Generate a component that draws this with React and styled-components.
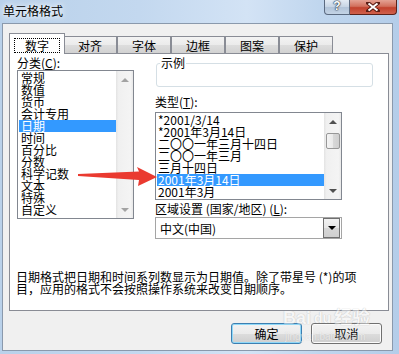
import React from "react";
import styled, { createGlobalStyle } from "styled-components";

const GlobalStyle = createGlobalStyle`
  html, body {
    margin: 0;
    padding: 0;
  }
  body {
    width: 399px;
    height: 354px;
    overflow: hidden;
    font-family: "Liberation Sans", "Noto Sans CJK SC", sans-serif;
    font-size: 12px;
    color: #000;
  }
`;

const categories = ["常规", "数值", "货币", "会计专用", "日期", "时间", "百分比", "分数", "科学记数", "文本", "特殊", "自定义"];
const types = ["*2001/3/14", "*2001年3月14日", "二〇〇一年三月十四日", "二〇〇一年三月", "三月十四日", "2001年3月14日", "2001年3月"];
const tabs = ["数字", "对齐", "字体", "边框", "图案", "保护"];

export default function App() {
  return (
    <>
      <GlobalStyle />
      <Frame>
        <TitleBar>
          <Title>单元格格式</Title>
          <Caption>
            <HelpBtn>?</HelpBtn>
            <CloseBtn>
              <svg width="14" height="10" viewBox="0 0 14 10">
                <path d="M2 1 L12 9 M12 1 L2 9" stroke="#5a1d15" strokeWidth="4" strokeLinecap="round" />
                <path d="M2.5 1.5 L11.5 8.5 M11.5 1.5 L2.5 8.5" stroke="#fff" strokeWidth="2" />
              </svg>
            </CloseBtn>
          </Caption>
        </TitleBar>
        <Client>
          <TabStrip>
            {tabs.map((t, i) => (
              <Tab key={t} active={i === 0}>
                {i === 0 ? <Focus>{t}</Focus> : t}
              </Tab>
            ))}
          </TabStrip>
          <Panel>
            <Columns>
              <LeftCol>
                <Label>分类(<u>C</u>):</Label>
                <ListBox h={149}>
                  <Items>
                    {categories.map((c, i) => (
                      <Item key={c} indent={2} selected={i === 4}>{c}</Item>
                    ))}
                  </Items>
                  <ScrollBar>
                    <Arrow dim />
                    <Track />
                    <Arrow dim down />
                  </ScrollBar>
                </ListBox>
              </LeftCol>
              <RightCol>
                <Sample>
                  <Legend>示例</Legend>
                </Sample>
                <Label top={9}>类型(<u>T</u>):</Label>
                <ListBox h={88} w={187} top={3}>
                  <Items>
                    {types.map((t, i) => (
                      <Item key={t} indent={1} selected={i === 5}>{t}</Item>
                    ))}
                  </Items>
                  <ScrollBar>
                    <Arrow />
                    <Track>
                      <Thumb />
                    </Track>
                    <Arrow down />
                  </ScrollBar>
                </ListBox>
                <Label top={3}>区域设置 (国家/地区) (<u>L</u>):</Label>
                <Combo>
                  <ComboText>中文(中国)</ComboText>
                  <ComboBtn />
                </Combo>
              </RightCol>
            </Columns>
            <Description>
              日期格式把日期和时间系列数显示为日期值。除了带星号 (*)的项<br />
              目，应用的格式不会按照操作系统来改变日期顺序。
            </Description>
          </Panel>
          <ButtonRow>
            <Button primary>确定</Button>
            <Button>取消</Button>
          </ButtonRow>
        </Client>
        <Watermark>
          <Brand>Bai<Paw>du</Paw>经验</Brand>
          <Site>jingyan.baidu.com</Site>
        </Watermark>
        <Pointer width="399" height="354" viewBox="0 0 399 354">
          <polygon
            points="78,174 139,171.5 137,167 157,177 138,186 139,180 78,176"
            fill="#ea3a30"
          />
        </Pointer>
      </Frame>
    </>
  );
}

const Frame = styled.div`
width: 399px;
height: 354px;
box-sizing: border-box;
padding: 0 6px 3px 2px;
display: flex;
flex-direction: column;
position: relative;
background: linear-gradient(90deg, #b9d1ea 0%, #c3d8ef 35%, #d3e3f5 62%, #c0d6ee 80%, #b4cde9 100%);
`

const TitleBar = styled.div`
height: 23px;
flex: none;
display: flex;
align-items: flex-start;
justify-content: space-between;
`

const Title = styled.div`
margin: 4px 0 0 1px;
font-family: "Noto Sans CJK SC", sans-serif;
font-size: 12px;
line-height: 14px;
text-shadow: 0 0 5px #fff, 0 0 8px #fff;
`

const Caption = styled.div`
display: flex;
margin-right: -4px;
`

const HelpBtn = styled.div`
width: 26px;
height: 15px;
box-sizing: border-box;
border: 1px solid #5b6a80;
border-top: none;
border-radius: 0 0 0 4px;
background: linear-gradient(180deg, #e3ebf4 0%, #c6d4e4 50%, #b1c3d8 51%, #c3d3e5 100%);
color: #fff;
font-family: "Liberation Sans", sans-serif;
font-weight: bold;
font-size: 12px;
line-height: 13px;
text-align: center;
text-shadow: 0 0 1px #243449, 0 0 1px #243449, 0 0 2px #243449;
`

const CloseBtn = styled.div`
width: 47px;
height: 15px;
box-sizing: border-box;
border: 1px solid #5c2219;
border-top: none;
border-left: none;
border-radius: 0 0 4px 0;
background: linear-gradient(180deg, #e4a294 0%, #d2705d 45%, #c2412d 55%, #d0614c 100%);
display: flex;
align-items: center;
justify-content: center;
`

const Client = styled.div`
flex: 1;
box-sizing: border-box;
border: 1px solid #8a99ac;
background: #f0f0f0;
padding: 9px 0 0 6px;
display: flex;
flex-direction: column;
`

const TabStrip = styled.div`
display: flex;
align-items: flex-end;
height: 21px;
margin-bottom: -1px;
position: relative;
z-index: 1;
`

const Tab = styled.div`
box-sizing: border-box;
display: flex;
align-items: center;
justify-content: center;
font-family: "Noto Sans CJK SC", sans-serif;
border: 1px solid #898c95;
border-bottom: none;
width: ${p => (p.active ? "56px" : "54px")};
height: ${p => (p.active ? "21px" : "17px")};
margin-right: ${p => (p.active ? "-2px" : "0")};
margin-bottom: ${p => (p.active ? "0" : "1px")};
padding-top: ${p => (p.active ? "0" : "1px")};
background: ${p => (p.active ? "#fff" : "linear-gradient(180deg, #f3f3f3 0%, #ebebeb 50%, #dddddd 51%, #d2d2d2 100%)")};
position: relative;
z-index: ${p => (p.active ? 2 : 1)};
`

const Focus = styled.span`
width: 46px;
height: 15px;
margin-top: 2px;
box-sizing: border-box;
border: 1px dotted #000;
display: flex;
align-items: center;
justify-content: center;
`

const Panel = styled.div`
width: 380px;
height: 258px;
box-sizing: border-box;
border: 1px solid #898c95;
background: #fff;
display: flex;
flex-direction: column;
`

const Columns = styled.div`
display: flex;
gap: 21px;
padding-left: 7px;
`

const LeftCol = styled.div`
display: flex;
flex-direction: column;
padding-top: 3px;
`

const RightCol = styled.div`
display: flex;
flex-direction: column;
`

const Label = styled.div`
font-family: "Noto Sans CJK SC", sans-serif;
line-height: 12px;
height: 12px;
margin-top: ${p => p.top || 0}px;
margin-bottom: 1px;
white-space: nowrap;
`

const ListBox = styled.div`
width: ${p => p.w || 117}px;
height: ${p => p.h}px;
margin-top: ${p => p.top || 0}px;
box-sizing: border-box;
border: 1px solid #828790;
background: #fff;
display: flex;
`

const Items = styled.div`
flex: 1;
padding: 1px 0 0 1px;
overflow: hidden;
`

const Item = styled.div`
height: 12px;
line-height: 12px;
padding-left: ${p => p.indent}px;
white-space: nowrap;
font-family: "Noto Sans CJK SC", sans-serif;
background: ${p => (p.selected ? "#3399ff" : "transparent")};
color: ${p => (p.selected ? "#fff" : "#000")};
`

const ScrollBar = styled.div`
width: 17px;
flex: none;
display: flex;
flex-direction: column;
background: linear-gradient(90deg, #e3e3e3 0%, #f0f0f0 15%, #f4f4f4 85%, #e8e8e8 100%);
`

const Arrow = styled.div`
height: 17px;
flex: none;
display: flex;
align-items: center;
justify-content: center;

&::after {
  content: "";
  border-left: 4px solid transparent;
  border-right: 4px solid transparent;
  ${p => (p.down ? "border-top" : "border-bottom")}: 4px solid ${p => (p.dim ? "#a3a3a3" : "#505050")};
}
`

const Track = styled.div`
flex: 1;
padding-top: 3px;
display: flex;
justify-content: center;
`

const Thumb = styled.div`
width: 14px;
height: 16px;
box-sizing: border-box;
border: 1px solid #979797;
border-radius: 2px;
background: linear-gradient(90deg, #f4f4f4 0%, #e9e9e9 50%, #d8d8d8 51%, #cfcfcf 100%);
`

const Sample = styled.div`
width: 217px;
height: 24px;
margin: 9px 0 0 1px;
box-sizing: border-box;
border: 1px solid #d5dfe5;
border-radius: 3px;
position: relative;
`

const Legend = styled.span`
position: absolute;
top: -7px;
left: 3px;
padding: 0 1px;
background: #fff;
font-family: "Noto Sans CJK SC", sans-serif;
line-height: 12px;
`

const Combo = styled.div`
width: 187px;
height: 22px;
margin-top: 1px;
box-sizing: border-box;
border: 1px solid #a5a5a5;
background: #fff;
display: flex;
align-items: center;
padding-right: 1px;
`

const ComboText = styled.div`
flex: 1;
padding-left: 4px;
font-family: "Noto Sans CJK SC", sans-serif;
`

const ComboBtn = styled.div`
width: 17px;
height: 20px;
box-sizing: border-box;
border: 1px solid #6f6f6f;
background: linear-gradient(180deg, #f2f2f2 0%, #e6e6e6 50%, #d6d6d6 51%, #cfcfcf 100%);
display: flex;
align-items: center;
justify-content: center;

&::after {
  content: "";
  border-left: 4px solid transparent;
  border-right: 4px solid transparent;
  border-top: 4px solid #000;
}
`

const Description = styled.div`
margin-top: 32px;
padding-left: 6px;
line-height: 12px;
font-family: "Noto Sans CJK SC", sans-serif;
white-space: nowrap;
`

const ButtonRow = styled.div`
display: flex;
justify-content: flex-end;
gap: 9px;
padding-right: 10px;
margin-top: 12px;
`

const Button = styled.div`
width: 71px;
height: 21px;
box-sizing: border-box;
border: 1px solid ${p => (p.primary ? "#3c7fb1" : "#707070")};
border-radius: 3px;
box-shadow: ${p => (p.primary ? "inset 0 0 0 1px #8fd8f8" : "inset 0 0 0 1px #fbfbfb")};
background: linear-gradient(180deg, #f2f2f2 0%, #ebebeb 50%, #dddddd 51%, #cfcfcf 100%);
display: flex;
align-items: center;
justify-content: center;
font-family: "Noto Sans CJK SC", sans-serif;
position: relative;
z-index: 2;
`

const Watermark = styled.div`
position: absolute;
left: 283px;
top: 309px;
opacity: 0.45;
pointer-events: none;
z-index: 3;
`

const Brand = styled.div`
display: flex;
align-items: center;
height: 18px;
line-height: 18px;
font-family: "Liberation Sans", "Noto Sans CJK SC", sans-serif;
font-weight: bold;
font-size: 18px;
color: #fff;
text-shadow: 0 0 1px #9a9a9a, 0 0 1px #9a9a9a;
`

const Paw = styled.span`
font-size: 14px;
margin: 0 3px;
`

const Site = styled.div`
font-family: "Liberation Sans", sans-serif;
font-size: 10px;
line-height: 10px;
color: #fff;
text-shadow: 0 0 1px #9a9a9a;
margin: 5px 0 0 2px;
`

const Pointer = styled.svg`
position: absolute;
left: 0;
top: 0;
pointer-events: none;
`
